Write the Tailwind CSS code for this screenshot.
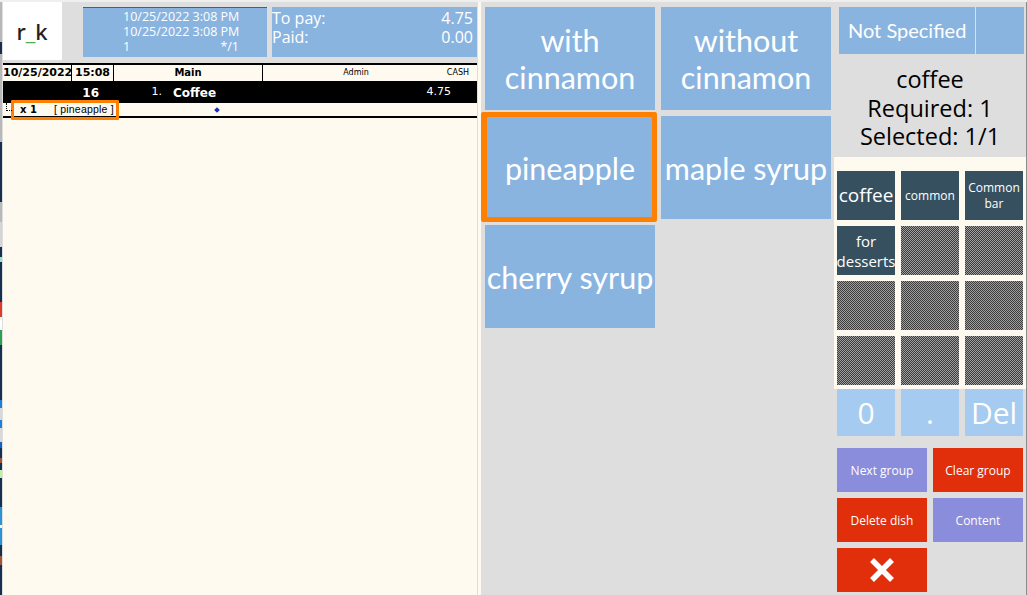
<!DOCTYPE html>
<html lang="en">
<head>
  <meta charset="UTF-8" />
  <title>r_k modifiers</title>
  <script src="https://cdn.jsdelivr.net/npm/@tailwindcss/browser@4"></script>
</head>
<body class="bg-[#dedede] font-['Open_Sans',sans-serif] overflow-hidden">
  <div class="h-[2px] w-[1027px] bg-[#efefef]"></div>
  <div class="flex h-[593px] w-[1027px] overflow-hidden">

    <!-- desktop behind the window -->
    <div class="flex h-full w-[2px] shrink-0 flex-col bg-[#14304f]">
      <div class="h-[40px] bg-[#b8b8b8]"></div>
      <div class="h-[12px]"></div>
      <div class="h-[88px] bg-[#b8b8b8]"></div>
      <div class="h-[60px]"></div>
      <div class="h-[20px] bg-[#b8b8b8]"></div>
      <div class="h-[25px] bg-[#d4d4d4]"></div>
      <div class="h-[10px]"></div>
      <div class="h-[5px] bg-[#8fe8c0]"></div>
      <div class="h-[40px]"></div>
      <div class="h-[15px] bg-[#e0392b]"></div>
      <div class="h-[13px] bg-white"></div>
      <div class="h-[15px] bg-[#2e9e4f]"></div>
      <div class="h-[55px]"></div>
      <div class="h-[8px] bg-[#1f7fd8]"></div>
      <div class="h-[12px] bg-[#d8d8d8]"></div>
      <div class="h-[8px] bg-[#1f7fd8]"></div>
      <div class="h-[14px] bg-[#d8d8d8]"></div>
      <div class="h-[6px] bg-[#1563c0]"></div>
      <div class="h-[10px]"></div>
      <div class="h-[5px] bg-[#a0553a]"></div>
      <div class="h-[7px]"></div>
      <div class="h-[8px] bg-[#b8f5a0]"></div>
      <div class="h-[29px]"></div>
      <div class="h-[18px] bg-[#2a93d5]"></div>
      <div class="h-[3px] bg-white"></div>
      <div class="h-[17px] bg-[#2a93d5]"></div>
      <div class="h-[11px]"></div>
      <div class="h-[9px] bg-[#a0553a]"></div>
    </div>

    <!-- left: order -->
    <div class="flex h-full w-[475px] shrink-0 flex-col pl-px">
      <div class="flex h-[61px] shrink-0">
        <div class="flex h-[58px] w-[59px] items-center justify-center bg-white pr-px font-['Noto_Sans',sans-serif] text-[22px] font-medium text-[#222]">
          r<span class="text-[#4caf50]">_</span>k
        </div>
        <div class="mt-[5px] ml-[21px] flex h-[50px] w-[184px] flex-col whitespace-nowrap border-t border-[#5b4bb0] bg-[#8ab4e0] pl-10 pr-7 text-[12.5px] leading-[15px] text-white">
          <div class="mt-[1px]">10/25/2022 3:08 PM</div>
          <div>10/25/2022 3:08 PM</div>
          <div class="flex justify-between"><span>1</span><span>*/1</span></div>
        </div>
        <div class="mt-[5px] ml-[5px] flex h-[50px] w-[205px] flex-col bg-[#8ab4e0] pt-[2px] pr-[4px] text-[16px] leading-[19px] text-white">
          <div class="flex justify-between"><span>To pay:</span><span>4.75</span></div>
          <div class="flex justify-between"><span>Paid:</span><span>0.00</span></div>
        </div>
      </div>

      <div class="flex-1 border-t-2 border-black bg-[#fffaf0] font-['DejaVu_Sans',sans-serif]">
        <div class="flex h-[16px] items-center text-black">
          <div class="w-[69px] shrink-0 border-r border-black text-[11px] font-bold leading-[16px]">10/25/2022</div>
          <div class="w-[42px] shrink-0 border-r border-black text-center text-[11px] font-bold leading-[16px]">15:08</div>
          <div class="w-[149px] shrink-0 border-r border-black text-center text-[10px] font-bold leading-[16px]">Main</div>
          <div class="w-[180px] shrink-0 pl-[6px] text-center text-[8px]">Admin</div>
          <div class="ml-auto pr-2 text-[8px]">CASH</div>
        </div>
        <div class="flex h-[22px] items-center bg-black pt-px text-white">
          <div class="w-[96px] shrink-0 text-right text-[12px] font-bold">16</div>
          <div class="w-[63px] shrink-0 text-right text-[11px]">1.</div>
          <div class="ml-[11px] text-[12px] font-bold">Coffee</div>
          <div class="ml-auto pr-[26px] text-[11px]">4.75</div>
        </div>
        <div class="relative flex h-[15px] items-center border-b-2 border-black text-[10px] text-black">
          <div class="ml-[17px] w-[34px] font-bold">x 1</div>
          <div class="font-['Liberation_Sans',sans-serif] text-[10.5px] tracking-[0.2px]">[ pineapple ]</div>
          <div class="absolute top-[5px] left-[212px] size-[4px] rotate-45 bg-[#1a2fc0]"></div>
          <div class="absolute -top-[3px] left-[8px] h-[20px] w-[108px] rounded-[1px] border-[3px] border-[#ff7f00]"></div>
          <div class="absolute top-0 left-[3px] h-[8px] w-[6px] border-b border-l border-dotted border-black"></div>
        </div>
      </div>
    </div>

    <!-- middle: modifier buttons -->
    <div class="ml-px h-full w-[356px] shrink-0 border-l-[3px] border-[#fffaf0] pl-[4px] pt-[5px]">
      <div class="grid grid-cols-[170px_170px] auto-rows-[103px] gap-[6px] whitespace-nowrap text-center font-['Lato',sans-serif] text-[30.5px] leading-[37px] text-white">
        <div class="flex items-center justify-center bg-[#8ab4e0]">with<br />cinnamon</div>
        <div class="flex items-center justify-center bg-[#8ab4e0]">without<br />cinnamon</div>
        <div class="relative flex items-center justify-center bg-[#8ab4e0] pt-px">pineapple
          <div class="absolute -top-[4px] -right-[2px] -bottom-[3px] -left-[4px] rounded-[2px] border-[5px] border-l-[6px] border-[#ff7f00]"></div>
        </div>
        <div class="flex items-center justify-center bg-[#8ab4e0] pt-px">maple syrup</div>
        <div class="flex items-center justify-center bg-[#8ab4e0] pt-px">cherry syrup</div>
      </div>
    </div>

    <!-- right: group panel -->
    <div class="flex h-full flex-1 flex-col border-r border-[#8a8a8a]">
      <div class="mt-[5px] ml-[5px] flex h-[47px] w-[185px] gap-px">
        <div class="flex w-[136px] items-center bg-[#8ab4e0] pb-[2px] pl-[9px] font-['Lato',sans-serif] text-[20px] text-white">Not Specified</div>
        <div class="flex-1 bg-[#8ab4e0]"></div>
      </div>
      <div class="flex h-[103px] flex-col items-center justify-center pt-[5px] text-[23.5px] leading-[28.5px] text-black">
        <div>coffee</div>
        <div>Required: 1</div>
        <div>Selected: 1/1</div>
      </div>
      <div class="bg-[#fffaf0] pt-[14px] pb-[4px] pl-[3px]">
        <div class="grid grid-cols-[58px_58px_58px] auto-rows-[49px] gap-[6px] text-center text-white">
          <div class="flex items-center justify-center bg-[#37505f] text-[19px]">coffee</div>
          <div class="flex items-center justify-center bg-[#37505f] text-[12px]">common</div>
          <div class="flex items-center justify-center bg-[#37505f] text-[12px] leading-[16px]">Common<br />bar</div>
          <div class="flex items-center justify-center bg-[#37505f] text-[15px] leading-[20px]">for<br />desserts</div>
          <svg class="size-full"><defs><pattern id="chk" width="2" height="2" patternUnits="userSpaceOnUse"><rect width="2" height="2" fill="#a0a0a0" /><rect width="1" height="1" fill="#3a3a3a" /><rect x="1" y="1" width="1" height="1" fill="#3a3a3a" /></pattern></defs><rect width="100%" height="100%" fill="url(#chk)" shape-rendering="crispEdges" /></svg>
          <svg class="size-full"><rect width="100%" height="100%" fill="url(#chk)" shape-rendering="crispEdges" /></svg>
          <svg class="size-full"><rect width="100%" height="100%" fill="url(#chk)" shape-rendering="crispEdges" /></svg>
          <svg class="size-full"><rect width="100%" height="100%" fill="url(#chk)" shape-rendering="crispEdges" /></svg>
          <svg class="size-full"><rect width="100%" height="100%" fill="url(#chk)" shape-rendering="crispEdges" /></svg>
          <svg class="size-full"><rect width="100%" height="100%" fill="url(#chk)" shape-rendering="crispEdges" /></svg>
          <svg class="size-full"><rect width="100%" height="100%" fill="url(#chk)" shape-rendering="crispEdges" /></svg>
          <svg class="size-full"><rect width="100%" height="100%" fill="url(#chk)" shape-rendering="crispEdges" /></svg>
        </div>
      </div>
      <div class="ml-[3px] grid h-[47px] grid-cols-[58px_58px_58px] gap-x-[6px] text-center text-[30px] text-white">
        <div class="flex items-center justify-center bg-[#a6cbf0]">0</div>
        <div class="flex items-center justify-center bg-[#a6cbf0]">.</div>
        <div class="flex items-center justify-center bg-[#a6cbf0]">Del</div>
      </div>
      <div class="mt-[12px] ml-[3px] grid grid-cols-[90px_90px] auto-rows-[44px] gap-[6px] text-center text-[12px] text-white">
        <div class="flex items-center justify-center bg-[#8a8cdc] pt-px">Next group</div>
        <div class="flex items-center justify-center bg-[#e12e0b] pt-px">Clear group</div>
        <div class="flex items-center justify-center bg-[#e12e0b] pt-px">Delete dish</div>
        <div class="flex items-center justify-center bg-[#8a8cdc] pt-px">Content</div>
        <div class="flex items-center justify-center bg-[#e12e0b]">
          <svg width="26" height="26" viewBox="0 0 26 26"><path d="M3 3 L23 23 M23 3 L3 23" stroke="#fff" stroke-width="5.5" /></svg>
        </div>
      </div>
    </div>
  </div>
</body>
</html>
